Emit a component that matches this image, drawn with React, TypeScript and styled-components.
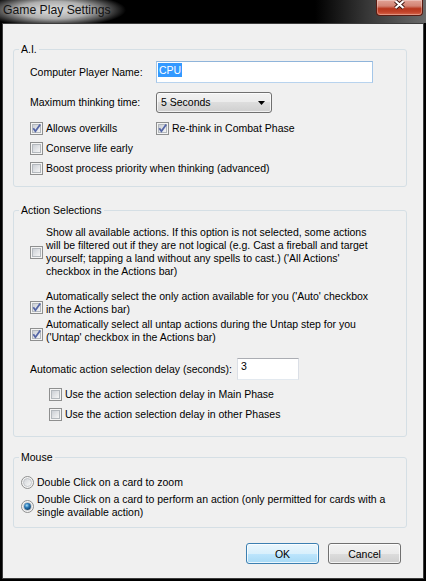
import * as React from 'react';
import styled, { createGlobalStyle } from 'styled-components';

const GlobalStyle = createGlobalStyle`
    html, body {
        margin: 0;
        padding: 0;
        background: #000;
    }
`

const Window = styled.div`
    width: 426px;
    height: 581px;
    background: #000;
    display: flex;
    flex-direction: column;
    overflow: hidden;
    font-family: 'Liberation Sans', Arial, sans-serif;
    font-size: 10.5px;
    color: #000;
`

const TitleBar = styled.div`
    height: 23px;
    flex: none;
    display: flex;
    justify-content: space-between;
    align-items: flex-start;
    background:
        radial-gradient(ellipse 72px 17px at 54px 10px, rgba(232, 232, 232, 0.97) 0%, rgba(205, 205, 205, 0.85) 50%, rgba(0, 0, 0, 0) 100%),
        linear-gradient(to right, #000 0%, #000 74%, #363636 86%, #6a6a6a 100%);
`

const Title = styled.div`
    font-size: 12.2px;
    line-height: 15px;
    padding: 3px 0 0 3px;
    color: #121212;
`

const CloseButton = styled.div`
    width: 47px;
    height: 16px;
    margin-right: 3px;
    box-sizing: border-box;
    border: 1px solid #5b1c12;
    border-top: none;
    border-radius: 0 0 4px 4px;
    background: linear-gradient(#e2a396 0%, #d38474 40%, #b8371d 58%, #c2432a 80%, #d86a4e 100%);
    box-shadow: inset 0 0 0 1px rgba(255, 255, 255, 0.3);
    display: flex;
    justify-content: center;
`

const Client = styled.div`
    flex: 1;
    margin: 0 2px 2px 2px;
    border: 1px solid #3c3c3c;
    background: #f0f0f0;
    padding: 19px 16px 0 10px;
    display: flex;
    flex-direction: column;
`

const Group = styled.fieldset<{ $mt?: number }>`
    margin: ${p => p.$mt ?? 0}px 0 0 0;
    padding: 0;
    min-width: 0;
    border: 1px solid #d5dfe5;
    border-radius: 3px;
`

const Legend = styled.legend`
    margin-left: 5px;
    padding: 0 2px;
    line-height: 13px;
`

const GroupBody = styled.div<{ $pad: string }>`
    padding: ${p => p.$pad};
    display: flex;
    flex-direction: column;
`

const FormRow = styled.div<{ $h: number; $mt?: number; $col?: number }>`
    display: grid;
    grid-template-columns: ${p => p.$col ?? 126}px auto;
    align-items: center;
    height: ${p => p.$h}px;
    margin-top: ${p => p.$mt ?? 0}px;
    line-height: 13px;
    white-space: nowrap;
`

const TextBox = styled.div<{ $w: number; $focus?: boolean }>`
    width: ${p => p.$w}px;
    height: 22px;
    box-sizing: border-box;
    background: #fff;
    border: 1px solid ${p => (p.$focus ? '#a4c6e8' : '#dbdfe6')};
    border-top-color: ${p => (p.$focus ? '#8fb4da' : '#abadb3')};
    border-bottom-color: ${p => (p.$focus ? '#b8d3ee' : '#e3e9ef')};
    padding: 1px ${p => (p.$focus ? 1 : 3)}px;
    line-height: 13px;
`

const Selected = styled.span`
    display: inline-block;
    background: #3399ff;
    color: #fff;
    line-height: 14px;
    padding: 0 1px;
`

const Select = styled.div`
    width: 116px;
    height: 21px;
    box-sizing: border-box;
    border: 1px solid #707070;
    border-radius: 3px;
    background: linear-gradient(#f2f2f2 0%, #ebebeb 50%, #dddddd 50%, #cfcfcf 100%);
    box-shadow: inset 0 0 0 1px rgba(255, 255, 255, 0.7);
    display: flex;
    align-items: center;
    justify-content: space-between;
    padding: 0 4px 0 4px;
    line-height: 13px;
`

const OptionRow = styled.label<{ $mt?: number; $ml?: number; $h?: number; $top?: boolean }>`
    display: flex;
    align-items: ${p => (p.$top ? 'flex-start' : 'center')};
    gap: 3px;
    height: ${p => (p.$h ? `${p.$h}px` : 'auto')};
    margin-top: ${p => p.$mt ?? 0}px;
    margin-left: ${p => p.$ml ?? 0}px;
    line-height: 13px;
    white-space: nowrap;
`

const Glyph = styled.span<{ $top?: number }>`
    flex: none;
    width: 13px;
    height: 13px;
    margin-top: ${p => p.$top ?? 0}px;
    display: flex;
`

const ButtonRow = styled.div`
    display: flex;
    justify-content: flex-end;
    gap: 9px;
    margin: 15px 6px 0 0;
`

const Button = styled.button<{ $default?: boolean }>`
    width: 73px;
    height: 21px;
    box-sizing: border-box;
    padding: 0;
    font: inherit;
    color: #000;
    border: 1px solid ${p => (p.$default ? '#3c7fb1' : '#707070')};
    border-radius: 3px;
    background: ${p =>
        p.$default
            ? 'linear-gradient(#eaf6fd 0%, #d9f0fc 50%, #bee6fd 50%, #a7d9f5 100%)'
            : 'linear-gradient(#f2f2f2 0%, #ebebeb 50%, #dddddd 50%, #cfcfcf 100%)'};
    box-shadow: inset 0 0 0 1px rgba(255, 255, 255, 0.75);
`

const CheckGlyph: React.FC<{ checked?: boolean }> = ({ checked }) => {
    const id = React.useId().replace(/:/g, '');
    return (
        <svg width="13" height="13" viewBox="0 0 13 13">
            <defs>
                <linearGradient id={`cb${id}`} x1="0" y1="0" x2="1" y2="1">
                    <stop offset="0" stopColor="#c9cdd3" />
                    <stop offset="1" stopColor="#f8f8f8" />
                </linearGradient>
            </defs>
            <rect x="0.5" y="0.5" width="12" height="12" fill="#f4f4f4" stroke="#8e8f8f" />
            <rect x="2.5" y="2.5" width="8" height="8" fill={`url(#cb${id})`} stroke="#b3b8bd" />
            {checked && (
                <path d="M3.3 6.3 L5.4 9.2 L10.2 2.4" fill="none" stroke="#5566a6" strokeWidth="1.8" />
            )}
        </svg>
    );
};

const RadioGlyph: React.FC<{ checked?: boolean }> = ({ checked }) => {
    const id = React.useId().replace(/:/g, '');
    return (
        <svg width="13" height="13" viewBox="0 0 13 13">
            <defs>
                <linearGradient id={`rb${id}`} x1="0" y1="0" x2="1" y2="1">
                    <stop offset="0" stopColor="#cfd2d6" />
                    <stop offset="1" stopColor="#fbfbfb" />
                </linearGradient>
                <radialGradient id={`rd${id}`} cx="0.4" cy="0.35" r="0.7">
                    <stop offset="0" stopColor="#a8e0fb" />
                    <stop offset="0.45" stopColor="#2b7ab8" />
                    <stop offset="1" stopColor="#0d3a63" />
                </radialGradient>
            </defs>
            <circle cx="6.5" cy="6.5" r="6" fill="#f4f4f4" stroke="#8e8f8f" />
            <circle cx="6.5" cy="6.5" r="4" fill={`url(#rb${id})`} stroke="#b9bdc2" strokeWidth="0.8" />
            {checked && <circle cx="6.5" cy="6.5" r="3.4" fill={`url(#rd${id})`} />}
        </svg>
    );
};

const Check: React.FC<{
    checked?: boolean;
    top?: number;
    mt?: number;
    ml?: number;
    h?: number;
    children: React.ReactNode;
}> = ({ checked, top, mt, ml, h, children }) => (
    <OptionRow $mt={mt} $ml={ml} $h={h} $top={top !== undefined}>
        <Glyph $top={top}>
            <CheckGlyph checked={checked} />
        </Glyph>
        <span>{children}</span>
    </OptionRow>
);

const Radio: React.FC<{ checked?: boolean; mt?: number; h?: number; children: React.ReactNode }> = ({
    checked,
    mt,
    h,
    children,
}) => (
    <OptionRow $mt={mt} $h={h}>
        <Glyph>
            <RadioGlyph checked={checked} />
        </Glyph>
        <span>{children}</span>
    </OptionRow>
);

const GameplaySettings: React.FC = () => (
    <Window>
        <GlobalStyle />
        <TitleBar>
            <Title>Game Play Settings</Title>
            <CloseButton>
                <svg width="13" height="10" viewBox="0 0 13 10">
                    <path d="M2.5 1 L10.5 8 M10.5 1 L2.5 8" stroke="#3d1510" strokeWidth="4" />
                    <path d="M2.5 1 L10.5 8 M10.5 1 L2.5 8" stroke="#fff" strokeWidth="2.2" />
                </svg>
            </CloseButton>
        </TitleBar>
        <Client>
            <Group>
                <Legend>A.I.</Legend>
                <GroupBody $pad="5px 0 9px 16px">
                    <FormRow $h={22}>
                        <span>Computer Player Name:</span>
                        <TextBox $w={217} $focus>
                            <Selected>CPU</Selected>
                        </TextBox>
                    </FormRow>
                    <FormRow $h={21} $mt={9}>
                        <span>Maximum thinking time:</span>
                        <Select>
                            <span>5 Seconds</span>
                            <svg width="7" height="4" viewBox="0 0 7 4" style={{ marginRight: 2 }}>
                                <path d="M0 0 H7 L3.5 4 Z" fill="#000" />
                            </svg>
                        </Select>
                    </FormRow>
                    <FormRow $h={17} $mt={7}>
                        <Check checked>Allows overkills</Check>
                        <Check checked>Re-think in Combat Phase</Check>
                    </FormRow>
                    <Check h={17} mt={3}>Conserve life early</Check>
                    <Check h={17} mt={3}>Boost process priority when thinking (advanced)</Check>
                </GroupBody>
            </Group>

            <Group $mt={17}>
                <Legend>Action Selections</Legend>
                <GroupBody $pad="9px 0 13px 16px">
                    <Check top={20}>
                        Show all available actions. If this option is not selected, some actions
                        <br />
                        will be filtered out if they are not logical (e.g. Cast a fireball and target
                        <br />
                        yourself; tapping a land without any spells to cast.) ('All Actions'
                        <br />
                        checkbox in the Actions bar)
                    </Check>
                    <Check checked top={11} mt={12}>
                        Automatically select the only action available for you ('Auto' checkbox
                        <br />
                        in the Actions bar)
                    </Check>
                    <Check checked top={10} mt={2}>
                        Automatically select all untap actions during the Untap step for you
                        <br />
                        ('Untap' checkbox in the Actions bar)
                    </Check>
                    <FormRow $h={22} $mt={14} $col={207}>
                        <span>Automatic action selection delay (seconds):</span>
                        <TextBox $w={62}>3</TextBox>
                    </FormRow>
                    <Check h={17} mt={6} ml={19}>Use the action selection delay in Main Phase</Check>
                    <Check h={17} mt={3} ml={19}>Use the action selection delay in other Phases</Check>
                </GroupBody>
            </Group>

            <Group $mt={14}>
                <Legend>Mouse</Legend>
                <GroupBody $pad="10px 0 8px 7px">
                    <Radio h={17}>Double Click on a card to zoom</Radio>
                    <Radio checked mt={2} h={26}>
                        Double Click on a card to perform an action (only permitted for cards with a
                        <br />
                        single available action)
                    </Radio>
                </GroupBody>
            </Group>

            <ButtonRow>
                <Button $default>OK</Button>
                <Button>Cancel</Button>
            </ButtonRow>
        </Client>
    </Window>
);

export default GameplaySettings;
